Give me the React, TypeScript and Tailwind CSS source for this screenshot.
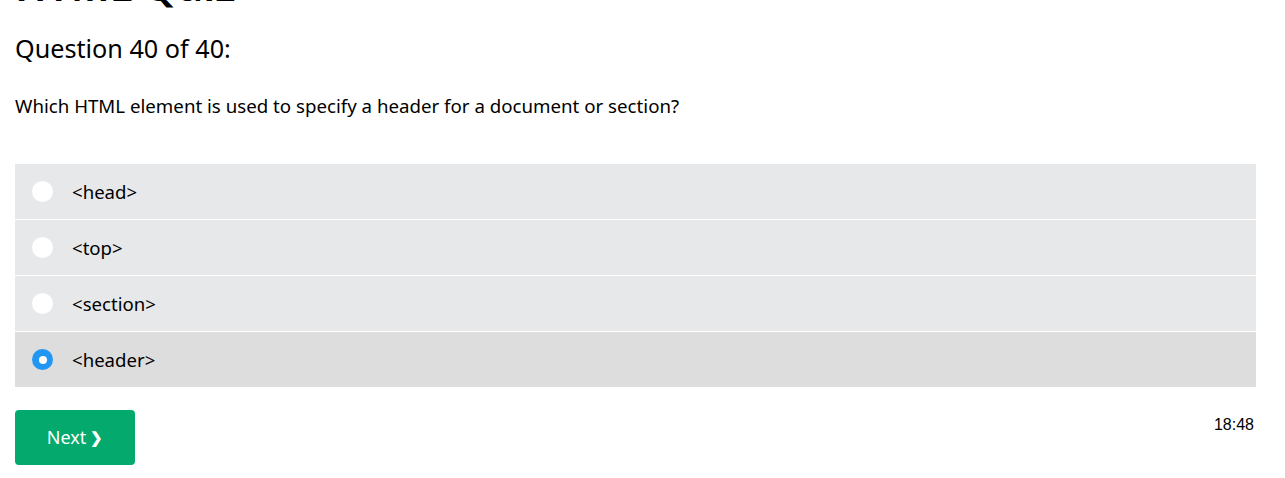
import React, { useState } from 'react';

const options = ['<head>', '<top>', '<section>', '<header>'];

export default function App() {
  const [picked, setPicked] = useState(3);

  return (
    <div className="bg-white min-h-screen px-[15px] text-black" style={{ fontFamily: '"Noto Sans", "Open Sans", sans-serif' }}>
      {/* page is scrolled, title only shows its bottom edge */}
      <h1 className="text-[42px] leading-[50px] mt-[-40px] font-semibold">HTML Quiz</h1>

      <h2 className="text-[25.2px] leading-[32px] mt-[22px]">Question 40 of 40:</h2>

      <p className="text-[18.7px] leading-[28px] mt-[28px]">
        Which HTML element is used to specify a header for a document or section?
      </p>

      <div className="mt-[44px] w-[1241px] flex flex-col gap-px">
        {options.map((opt, i) => {
          const on = i === picked;
          return (
            <label
              key={opt}
              onClick={() => setPicked(i)}
              className={`h-[55px] flex items-center cursor-pointer ${on ? 'bg-[#dddddd]' : 'bg-[#e7e8ea]'}`}
            >
              <span className="ml-[17px] w-[21px] h-[21px] shrink-0">
                {on ? (
                  <span className="w-[21px] h-[21px] rounded-full bg-[#2196f3] flex items-center justify-center">
                    <span className="w-[8px] h-[8px] rounded-full bg-white" />
                  </span>
                ) : (
                  <span className="block w-[21px] h-[21px] rounded-full bg-white" />
                )}
              </span>
              <span className="ml-[19px] text-[18.6px]">{opt}</span>
            </label>
          );
        })}
      </div>

      <div className="mt-[23px] w-[1241px] flex justify-between items-start">
        <button className="w-[120px] h-[55px] rounded-[4px] bg-[#04aa6d] text-white text-[18px] flex items-center justify-center">
          Next <span className="ml-[4px] font-bold text-[15px]">❯</span>
        </button>
        <span className="mt-[3px] mr-[2px] text-[16px]" style={{ fontFamily: '"Liberation Sans", Arial, sans-serif' }}>
          18:48
        </span>
      </div>
    </div>
  );
}
